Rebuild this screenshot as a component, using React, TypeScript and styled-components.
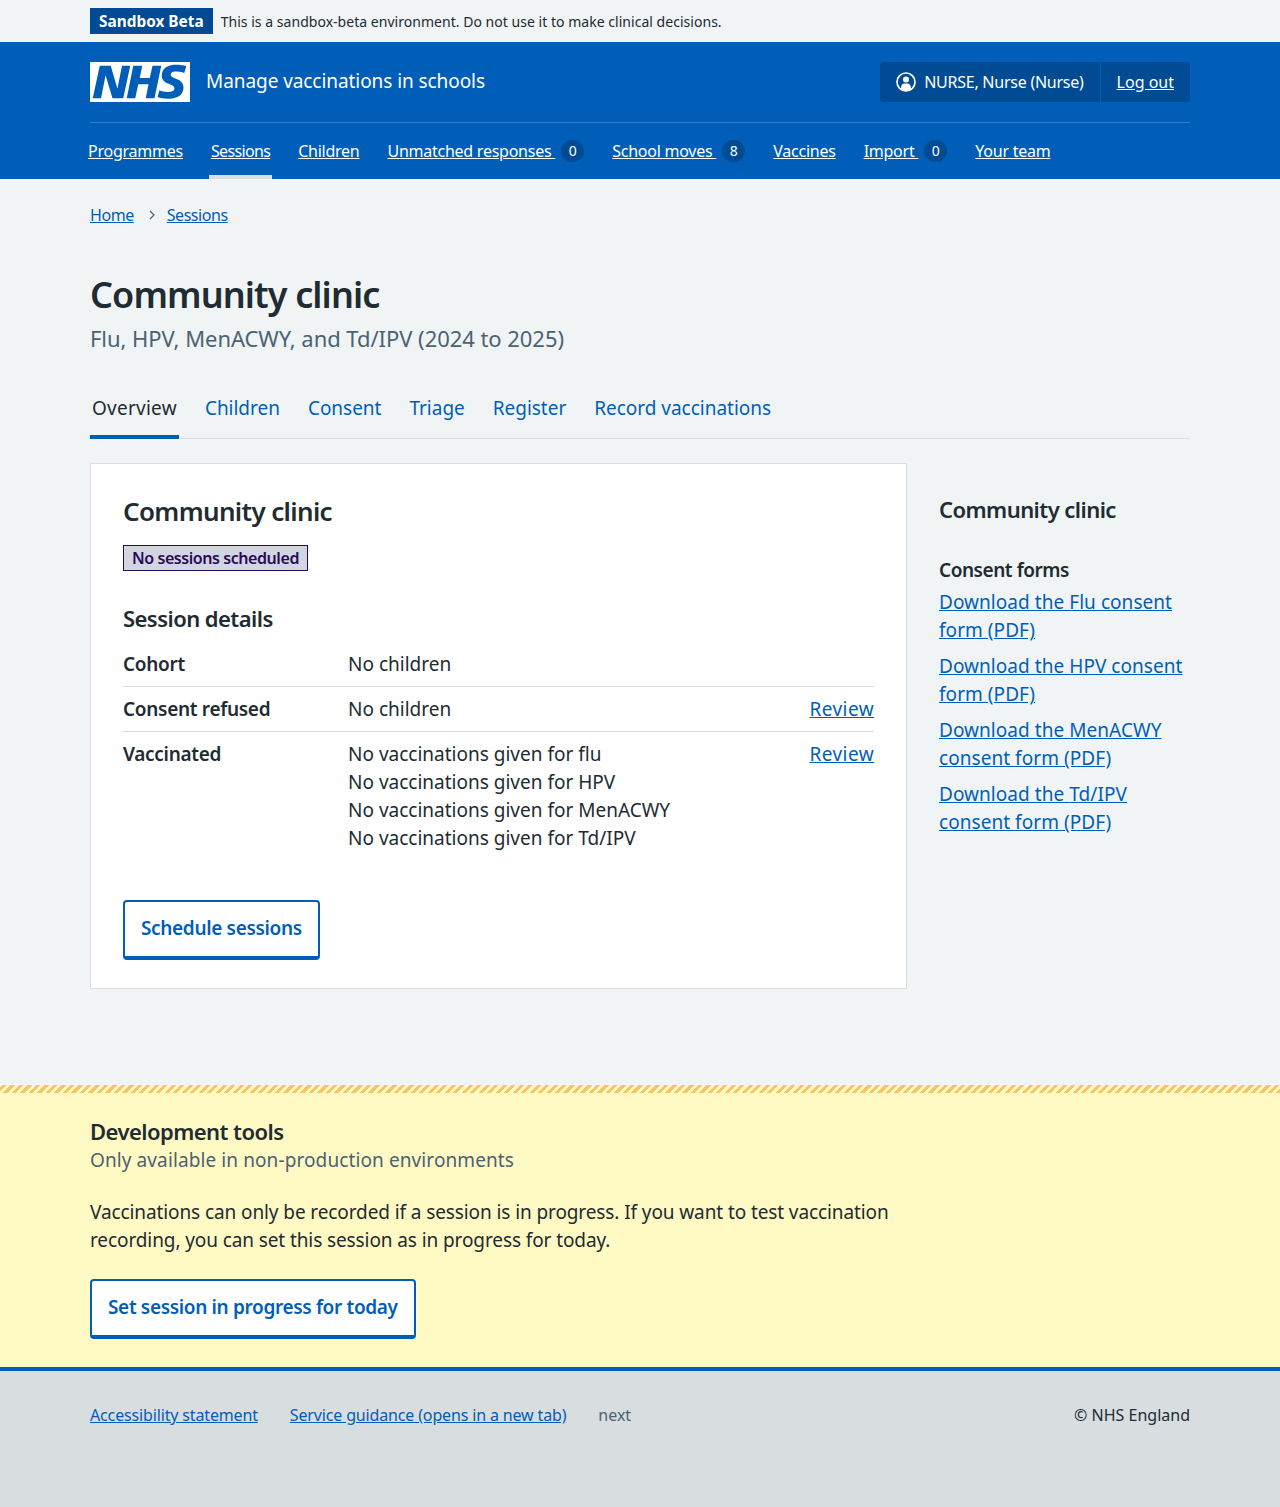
import styled, { createGlobalStyle } from "styled-components";

const BLUE = "#005eb8";
const DARK_BLUE = "#004b93";
const INK = "#212b32";
const GREY = "#4c6272";
const LINE = "#d8dde0";

const GlobalStyle = createGlobalStyle`
    html, body {
        margin: 0;
        padding: 0;
        background: #f0f4f5;
        color: ${INK};
        font-family: "Noto Sans", "Open Sans", Arial, sans-serif;
    }
    * {
        box-sizing: border-box;
    }
`;

const Wrap = styled.div`
    width: 1100px;
    margin: 0 auto;
`;

const Banner = styled(Wrap)`
    height: 42px;
    display: flex;
    align-items: center;
    gap: 8px;
    font-size: 14px;
    letter-spacing: 0.03px;
`;

const BannerTag = styled.strong`
    height: 26px;
    padding: 0 9px;
    background: ${DARK_BLUE};
    color: #fff;
    font-size: 15.4px;
    letter-spacing: 0;
    line-height: 27px;
`;

const Header = styled.header`
    height: 137px;
    padding-top: 20px;
    background: ${BLUE};
    color: #fff;
`;

const HeaderTop = styled.div`
    height: 61px;
    display: flex;
    align-items: flex-start;
    justify-content: space-between;
    border-bottom: 1px solid rgba(255, 255, 255, 0.2);
`;

const Brand = styled.div`
    display: flex;
    align-items: center;
    gap: 16px;
    height: 40px;
    font-size: 19px;
    letter-spacing: -0.07px;
`;

const BrandName = styled.span`
    padding-bottom: 2px;
`;

const Account = styled.div`
    display: flex;
    align-items: center;
    height: 40px;
    background: ${DARK_BLUE};
    border-radius: 4px;
    font-size: 16px;
`;

const AccountName = styled.div`
    display: flex;
    align-items: center;
    gap: 8px;
    height: 100%;
    padding: 0 16px;
    border-right: 1px solid ${BLUE};
    letter-spacing: -0.25px;
`;

const HeaderLink = styled.a`
    color: #fff;
    text-decoration: underline;
    white-space: pre;
`;

const LogOut = styled(HeaderLink)`
    padding: 0 16px;
`;

const Nav = styled.nav`
    display: flex;
    gap: 24px;
    height: 56px;
    margin-left: -4px;
    font-size: 16px;
    letter-spacing: -0.25px;
`;

const NavItem = styled.div<{ $active?: boolean }>`
    display: flex;
    align-items: center;
    padding: 4px 2px 0;
    letter-spacing: ${(p) => (p.$active ? "-0.65px" : "inherit")};
    border-bottom: 4px solid ${(p) => (p.$active ? LINE : "transparent")};
`;

const Count = styled.span`
    display: inline-block;
    min-width: 23px;
    height: 22px;
    margin-left: 6px;
    border-radius: 11px;
    background: ${DARK_BLUE};
    color: #fff;
    font-size: 14px;
    letter-spacing: 0;
    line-height: 22px;
    text-align: center;
`;

const Breadcrumbs = styled.div`
    display: flex;
    align-items: center;
    gap: 11px;
    padding-top: 24px;
    font-size: 16px;
    letter-spacing: -0.45px;
    line-height: 24px;
`;

const TextLink = styled.a`
    color: ${BLUE};
    text-decoration: underline;
`;

const Title = styled.h1`
    margin: 46px 0 5px;
    font-size: 36px;
    letter-spacing: -0.025em;
    line-height: 44px;
    font-weight: 600;
`;

const Subtitle = styled.div`
    color: ${GREY};
    font-size: 22px;
    letter-spacing: -0.05px;
    line-height: 32px;
`;

const Tabs = styled.div`
    display: flex;
    gap: 24px;
    height: 85px;
    padding-top: 25px;
    border-bottom: 1px solid ${LINE};
    font-size: 19px;
`;

const Tab = styled.div<{ $active?: boolean }>`
    height: 60px;
    padding: 0 2px;
    line-height: 58px;
    letter-spacing: ${(p) => (p.$active ? "0.25px" : "-0.02px")};
    color: ${(p) => (p.$active ? INK : BLUE)};
    border-bottom: 4px solid ${(p) => (p.$active ? BLUE : "transparent")};
`;

const Columns = styled.div`
    display: grid;
    grid-template-columns: 817px 251px;
    gap: 32px;
    margin-top: 24px;
`;

const Card = styled.section`
    height: 526px;
    padding: 31px 32px 28px;
    background: #fff;
    border: 1px solid ${LINE};
`;

const CardTitle = styled.h2`
    margin: 0 0 18px;
    font-size: 26px;
    letter-spacing: -0.025em;
    line-height: 32px;
    font-weight: 600;
`;

const StatusTag = styled.div`
    display: inline-block;
    height: 26px;
    padding: 0 8px;
    background: #d2d6e3;
    border: 1px solid #2a0a56;
    color: #2a0a56;
    font-size: 16px;
    font-weight: 600;
    letter-spacing: -0.43px;
    line-height: 24px;
    vertical-align: top;
`;

const SectionTitle = styled.h3`
    margin: 31px 0 8px;
    font-size: 22px;
    letter-spacing: -0.025em;
    line-height: 32px;
    font-weight: 600;
`;

const Row = styled.div`
    display: grid;
    grid-template-columns: 225px 1fr auto;
    padding: 8px 0;
    font-size: 19px;
    line-height: 28px;
    border-bottom: 1px solid ${LINE};

    &:last-of-type {
        border-bottom: 0;
    }
`;

const RowKey = styled.div`
    font-weight: 600;
    letter-spacing: -0.3px;
`;

const ReviewLink = styled.a`
    color: ${BLUE};
    text-decoration: underline;
    letter-spacing: 0.4px;
`;

const Button = styled.button`
    display: block;
    height: 60px;
    padding: 0 16px 3px;
    background: #fff;
    border: 2px solid ${BLUE};
    border-bottom-width: 4px;
    border-radius: 4px;
    color: ${BLUE};
    font-family: inherit;
    font-size: 19px;
    font-weight: 600;
    letter-spacing: -0.34px;
`;

const CardButton = styled(Button)`
    margin-top: 40px;
`;

const Side = styled.aside`
    padding-top: 30px;
`;

const SideTitle = styled.h2`
    margin: 0 0 31px;
    font-size: 22px;
    letter-spacing: -0.025em;
    line-height: 32px;
    font-weight: 600;
`;

const SideHeading = styled.div`
    margin-bottom: 4px;
    font-size: 19px;
    font-weight: 600;
    letter-spacing: -0.45px;
    line-height: 28px;
`;

const SideLink = styled(TextLink)`
    display: block;
    margin-bottom: 8px;
    font-size: 19px;
    letter-spacing: 0.05px;
    line-height: 28px;
`;

const DevTools = styled.section`
    height: 282px;
    margin-top: 96px;
    padding-top: 32px;
    background-color: #fff9c4;
    position: relative;

    &::before {
        content: "";
        position: absolute;
        top: 0;
        left: 0;
        right: 0;
        height: 8px;
        background: repeating-linear-gradient(
            -45deg,
            #f9c55e 0 3px,
            #fff9c4 3px 6px
        );
    }
`;

const DevTitle = styled.h2`
    margin: 0 0 1px;
    font-size: 22px;
    letter-spacing: -0.025em;
    line-height: 28px;
    font-weight: 600;
`;

const DevSub = styled.div`
    color: ${GREY};
    font-size: 19px;
    letter-spacing: 0.1px;
    line-height: 28px;
`;

const DevText = styled.p`
    width: 817px;
    margin: 24px 0 25px;
    font-size: 19px;
    letter-spacing: -0.1px;
    line-height: 28px;
`;

const Footer = styled.footer`
    height: 140px;
    padding-top: 32px;
    background: ${LINE};
    border-top: 4px solid ${BLUE};
    font-size: 16px;
    line-height: 24px;
`;

const FooterRow = styled(Wrap)`
    display: flex;
    gap: 32px;
`;

const FooterLink = styled(TextLink)`
    letter-spacing: -0.15px;
`;

const FooterMuted = styled.span`
    color: ${GREY};
`;

const Copyright = styled.span`
    margin-left: auto;
`;

const ChevronMark = styled.svg`
    margin-left: 4px;
`;

const NhsLogo = () => (
    <svg width="100" height="40" viewBox="0 0 40 16" role="img" aria-label="NHS">
        <path fill="#fff" d="M0 0h40v16H0z" />
        <path
            fill={BLUE}
            d="M3.9 1.5h4.4l2.6 9h.1l1.8-9h3.3l-2.8 13H9l-2.7-9h-.1l-1.8 9H1.1M17.3 1.5h3.6l-1 4.9h4L25 1.5h3.5l-2.7 13h-3.5l1.1-5.6h-4.1l-1.2 5.6h-3.4M37.7 4.4c-.7-.3-1.6-.6-2.9-.6-1.4 0-2.5.2-2.5 1.3 0 1.8 5.1 1.2 5.1 5.1 0 3.6-3.3 4.5-6.4 4.5-1.3 0-2.9-.3-4-.7l.8-2.7c.7.4 2.1.7 3.2.7s2.8-.2 2.8-1.5c0-2.1-5.1-1.3-5.1-5 0-3.4 2.9-4.4 5.8-4.4 1.6 0 3.1.2 4 .6"
        />
    </svg>
);

const UserIcon = () => (
    <svg width="20" height="20" viewBox="0 0 20 20" aria-hidden="true">
        <circle cx="10" cy="10" r="9" fill="none" stroke="#fff" strokeWidth="1.7" />
        <circle cx="10" cy="7.4" r="3" fill="#fff" />
        <path fill="#fff" d="M5.2 17.2v-2.4c0-2 1.5-3.4 3.4-3.4h2.8c1.9 0 3.4 1.4 3.4 3.4v2.4a9 9 0 0 1-9.6 0Z" />
    </svg>
);

const Chevron = () => (
    <ChevronMark width="7" height="10" viewBox="0 0 7 10" aria-hidden="true">
        <path d="M1 1l4 4-4 4" fill="none" stroke={GREY} strokeWidth="1.2" />
    </ChevronMark>
);

const navItems = [
    { label: "Programmes" },
    { label: "Sessions", active: true },
    { label: "Children" },
    { label: "Unmatched responses ", count: 0 },
    { label: "School moves ", count: 8 },
    { label: "Vaccines" },
    { label: "Import ", count: 0 },
    { label: "Your team" },
];

const tabs = ["Overview", "Children", "Consent", "Triage", "Register", "Record vaccinations"];

const consentForms = ["Flu", "HPV", "MenACWY", "Td/IPV"];

const App = () => (
    <>
        <GlobalStyle />
        <Banner>
            <BannerTag>Sandbox Beta</BannerTag>
            <span>This is a sandbox-beta environment. Do not use it to make clinical decisions.</span>
        </Banner>
        <Header>
            <Wrap>
                <HeaderTop>
                    <Brand>
                        <NhsLogo />
                        <BrandName>Manage vaccinations in schools</BrandName>
                    </Brand>
                    <Account>
                        <AccountName>
                            <UserIcon />
                            <span>NURSE, Nurse (Nurse)</span>
                        </AccountName>
                        <LogOut href="#">Log out</LogOut>
                    </Account>
                </HeaderTop>
                <Nav>
                    {navItems.map((item) => (
                        <NavItem key={item.label} $active={item.active}>
                            <HeaderLink href="#">{item.label}</HeaderLink>
                            {item.count !== undefined && <Count>{item.count}</Count>}
                        </NavItem>
                    ))}
                </Nav>
            </Wrap>
        </Header>
        <Wrap>
            <Breadcrumbs>
                <TextLink href="#">Home</TextLink>
                <Chevron />
                <TextLink href="#">Sessions</TextLink>
            </Breadcrumbs>
            <Title>Community clinic</Title>
            <Subtitle>Flu, HPV, MenACWY, and Td/IPV (2024 to 2025)</Subtitle>
            <Tabs>
                {tabs.map((tab, index) => (
                    <Tab key={tab} $active={index === 0}>
                        {tab}
                    </Tab>
                ))}
            </Tabs>
            <Columns>
                <Card>
                    <CardTitle>Community clinic</CardTitle>
                    <StatusTag>No sessions scheduled</StatusTag>
                    <SectionTitle>Session details</SectionTitle>
                    <Row>
                        <RowKey>Cohort</RowKey>
                        <div>No children</div>
                    </Row>
                    <Row>
                        <RowKey>Consent refused</RowKey>
                        <div>No children</div>
                        <ReviewLink href="#">Review</ReviewLink>
                    </Row>
                    <Row>
                        <RowKey>Vaccinated</RowKey>
                        <div>
                            <div>No vaccinations given for flu</div>
                            <div>No vaccinations given for HPV</div>
                            <div>No vaccinations given for MenACWY</div>
                            <div>No vaccinations given for Td/IPV</div>
                        </div>
                        <ReviewLink href="#">Review</ReviewLink>
                    </Row>
                    <CardButton>Schedule sessions</CardButton>
                </Card>
                <Side>
                    <SideTitle>Community clinic</SideTitle>
                    <SideHeading>Consent forms</SideHeading>
                    {consentForms.map((name) => (
                        <SideLink key={name} href="#">
                            Download the {name} consent form (PDF)
                        </SideLink>
                    ))}
                </Side>
            </Columns>
        </Wrap>
        <DevTools>
            <Wrap>
                <DevTitle>Development tools</DevTitle>
                <DevSub>Only available in non-production environments</DevSub>
                <DevText>
                    Vaccinations can only be recorded if a session is in progress. If you want to test vaccination
                    recording, you can set this session as in progress for today.
                </DevText>
                <Button>Set session in progress for today</Button>
            </Wrap>
        </DevTools>
        <Footer>
            <FooterRow>
                <FooterLink href="#">Accessibility statement</FooterLink>
                <FooterLink href="#">Service guidance (opens in a new tab)</FooterLink>
                <FooterMuted>next</FooterMuted>
                <Copyright>© NHS England</Copyright>
            </FooterRow>
        </Footer>
    </>
);

export default App;
